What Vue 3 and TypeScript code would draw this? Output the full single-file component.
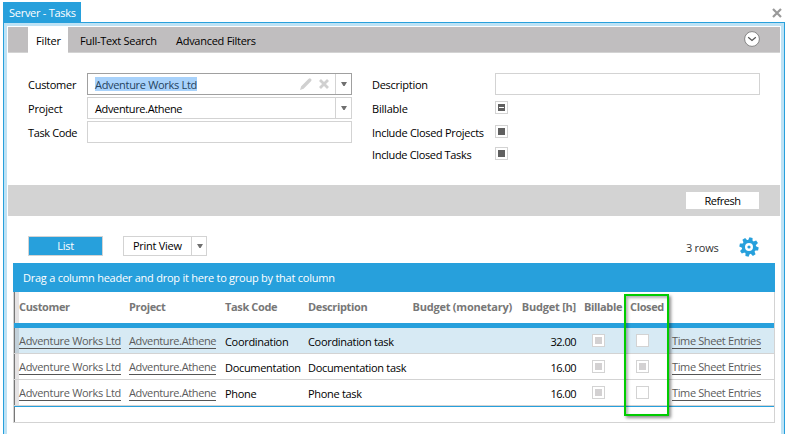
<script setup lang="ts">
interface Task {
  customer: string
  project: string
  code: string
  description: string
  hours: string
  closed: boolean
}

const tasks: Task[] = [
  { customer: 'Adventure Works Ltd', project: 'Adventure.Athene', code: 'Coordination', description: 'Coordination task', hours: '32.00', closed: false },
  { customer: 'Adventure Works Ltd', project: 'Adventure.Athene', code: 'Documentation', description: 'Documentation task', hours: '16.00', closed: true },
  { customer: 'Adventure Works Ltd', project: 'Adventure.Athene', code: 'Phone', description: 'Phone task', hours: '16.00', closed: false },
]
const teeth: number[] = [0, 45, 90, 135, 180, 225, 270, 315]
</script>

<template>
  <div class="page">
    <header class="titlebar">
      <div class="title"><span class="t-title">Server - Tasks</span></div>
      <svg class="close" width="10" height="10" viewBox="0 0 10 10"><path d="M1 1L9 9M9 1L1 9" stroke="#999" stroke-width="2.2" /></svg>
    </header>
    <main class="window">
      <nav class="tabs">
        <span class="tab active t-filter">Filter</span>
        <span class="tab t-full">Full-Text Search</span>
        <span class="tab t-adv">Advanced Filters</span>
        <svg class="collapse" width="16" height="16" viewBox="0 0 16 16"><circle cx="8" cy="8" r="7.4" fill="#fff" stroke="#858585" /><path d="M4.2 6.2L8 9.5L11.8 6.2" fill="none" stroke="#555" stroke-width="1.2" /></svg>
      </nav>
      <section class="filters">
        <div class="fields">
          <div class="field">
            <label class="t-cust">Customer</label>
            <div class="box combo focused">
              <span class="value"><mark class="t-awl">Adventure Works Ltd</mark></span>
              <svg class="edit" width="12" height="12" viewBox="0 0 12 12"><path d="M0 12L1.2 8.3L8.7 .8Q9.8 -.3 11 .9Q12.1 2.1 11 3.3L3.6 10.7Z" fill="#d0d0d0" /></svg>
              <svg class="clear" width="10" height="10" viewBox="0 0 10 10"><path d="M1 1L9 9M9 1L1 9" stroke="#d0d0d0" stroke-width="2.8" /></svg>
              <span class="arrow"><svg width="6" height="4" viewBox="0 0 6 4"><path d="M0 0H6L3.6 4H2.4Z" fill="#707070" /></svg></span>
            </div>
          </div>
          <div class="field">
            <label class="t-proj">Project</label>
            <div class="box combo">
              <span class="value t-ath">Adventure.Athene</span>
              <span class="arrow"><svg width="6" height="4" viewBox="0 0 6 4"><path d="M0 0H6L3.6 4H2.4Z" fill="#707070" /></svg></span>
            </div>
          </div>
          <div class="field"><label class="t-code">Task Code</label><div class="box"></div></div>
        </div>
        <div class="options">
          <div class="option tall"><label class="t-desc">Description</label><div class="box"></div></div>
          <div class="option"><label class="t-bill">Billable</label><i class="check strong mixed"></i></div>
          <div class="option"><label class="t-icp">Include Closed Projects</label><i class="check strong on"></i></div>
          <div class="option short"><label class="t-ict">Include Closed Tasks</label><i class="check strong on"></i></div>
        </div>
      </section>
      <div class="actions"><button class="refresh"><span class="t-ref">Refresh</span></button></div>
      <div class="toolbar">
        <button class="list"><span class="t-list">List</span></button>
        <div class="print"><span class="print-label t-print">Print View</span><span class="print-arrow"><svg width="6" height="4" viewBox="0 0 6 4"><path d="M0 0H6L3.6 4H2.4Z" fill="#707070" /></svg></span></div>
        <span class="count t-rows">3 rows</span>
        <svg class="gear" width="20" height="20" viewBox="-10 -10 20 20">
          <g fill="#27a0dc" transform="rotate(12)"><path v-for="a in teeth" :key="a" d="M-2.3 -6L-1.6 -9.6H1.6L2.3 -6Z" :transform="`rotate(${a})`" /></g>
          <circle r="5.6" fill="none" stroke="#27a0dc" stroke-width="3.2" /><circle r="1.6" fill="#27a0dc" />
        </svg>
      </div>
      <section class="table">
        <div class="groupbar"><span class="t-group">Drag a column header and drop it here to group by that column</span></div>
        <div class="grid">
          <div class="row head">
            <i class="gutter"></i>
            <span class="h-cust">Customer</span><span class="h-proj">Project</span><span class="h-code">Task Code</span><span class="h-desc">Description</span>
            <span class="num h-mon">Budget (monetary)</span><span class="num h-hrs">Budget [h]</span><span class="h-bill">Billable</span><span class="h-clo">Closed</span><span></span>
          </div>
          <div v-for="(t, i) in tasks" :key="i" class="row" :class="{ selected: i === 0 }">
            <i class="gutter"></i>
            <span><a class="t-awl">{{ t.customer }}</a></span>
            <span><a class="t-ath">{{ t.project }}</a></span>
            <span class="t-c">{{ t.code }}</span>
            <span class="t-d">{{ t.description }}</span>
            <span></span>
            <span class="num t-num">{{ t.hours }}</span>
            <span class="cell-check"><i class="check on"></i></span>
            <span class="cell-check closed"><i class="check" :class="{ on: t.closed }"></i></span>
            <span><a class="t-tse">Time Sheet Entries</a></span>
          </div>
          <div class="foot"><i class="gutter"></i></div>
        </div>
        <div class="highlight"></div>
      </section>
    </main>
  </div>
</template>

<style>
body { margin: 0; background: #fff; overflow: hidden; }
</style>

<style scoped>
.page { width: 791px; height: 434px; box-sizing: border-box; padding: 2px 6px 0 3px; overflow: hidden; font: 11px/16px "Open Sans", "Noto Sans", sans-serif; letter-spacing: -.27px; color: #000; white-space: nowrap; }
.page * { box-sizing: border-box; }
.titlebar { display: flex; justify-content: space-between; height: 20px; }
.title { width: 78px; background: #27a0dc; color: #fff; padding: 3px 0 0 6px; }
.close { margin: 6px 3px 0 0; }
.window { height: 440px; border: solid #27a0dc; border-width: 1px 1px 0; box-shadow: inset 3px 3px #bde2f5, inset -3px 0 #bde2f5; padding: 4px 4px 0; }
.tabs { display: flex; height: 26px; background: #c0bebf; border-bottom: 1px solid #d3d3d3; padding-left: 20px; }
.tab { height: 26px; padding: 6px 0 0 12px; }
.tab.active { width: 40px; background: #fff; padding-left: 8px; }
.t-full.tab { width: 96px; }
.t-filter { letter-spacing: -.15px; }
.t-proj, .t-bill { letter-spacing: -.2px; }
.t-code { letter-spacing: -.38px; }
.t-icp, .t-awl { letter-spacing: -.31px; }
.t-ict { letter-spacing: -.34px; }
.t-ath, .t-tse { letter-spacing: -.37px; }
.t-ref, .t-num { letter-spacing: -.5px; }
.t-d, .t-c { letter-spacing: -.31px; }
.t-group { letter-spacing: -.245px; }
.collapse { margin: 4px 20px 0 auto; }
.filters { display: flex; height: 132px; padding: 20px 0 0 20px; }
.fields { width: 324px; margin-right: 20px; display: flex; flex-direction: column; gap: 2px; }
.field, .option { display: flex; height: 22px; }
label { padding-top: 4px; }
.field label { width: 59px; }
.box { width: 265px; height: 22px; border: 1px solid #d3d3d3; background: #fff; }
.combo { display: flex; }
.focused { border-color: #a0a0a0; }
.value { padding: 3px 0 0 7px; flex: 1; }
mark { display: inline-block; height: 14px; line-height: 16px; background: #a8d2fb; color: #25435f; }
.edit { margin: 4px 7px 0 0; }
.clear { margin: 5px 6px 0 0; }
.arrow { width: 16px; border-left: 1px solid #d3d3d3; padding: 8px 0 0 5px; display: flex; }
.options { width: 390px; }
.option { height: 24px; }
.option.short { height: 22px; margin-top: -2px; }
.option label { width: 123px; }
.check { display: block; width: 13px; height: 13px; border: 1px solid #d3d3d3; background: #fff; padding: 2px; }
.check.on::before, .mixed::before { content: ""; display: block; box-sizing: border-box; width: 7px; height: 7px; background: #d3d1d2; }
.strong { margin-top: 4px; }
.strong.on::before { background: #606060; }
.check.mixed::before { border: solid #606060; border-width: 3px 1px; background: #fff; }
.actions { height: 31px; background: #d3d3d3; padding: 7px 21px 0 0; display: flex; justify-content: flex-end; }
button { font: inherit; letter-spacing: inherit; color: inherit; border: 0; padding: 0; margin: 0; }
.refresh { width: 73px; height: 17px; background: #fff; }
.toolbar { height: 47px; padding: 20px 20px 0; display: flex; }
.list { width: 75px; height: 20px; background: #27a0dc; border: 1px solid #d3d3d3; color: #fff; }
.print { display: flex; width: 84px; height: 20px; border: 1px solid #d3d3d3; margin-left: 20px; }
.print-label { width: 67px; padding: 1px 0 0 9px; }
.print-arrow { border-left: 1px solid #d3d3d3; display: flex; padding: 7px 0 0 5px; }
.count { margin: 4px 21px 0 auto; width: 32px; color: #333; }
.gear { margin-top: 1px; margin-right: 1px; }
.table { position: relative; width: 762px; margin-left: 5px; }
.groupbar { height: 29px; background: #27a0dc; color: #fff; padding: 7px 0 0 10px; }
.grid { border: solid #d3d3d3; border-width: 0 1px 1px; height: 131px; }
.row { display: grid; grid-template-columns: 5px 110px 96px 83px 104px 100px 64px 46px 42px 1fr; height: 26px; border-bottom: 1px solid #d3d3d3; }
.row > span { padding-top: 6px; }
.head { height: 36px; border-bottom: 5px solid #27a0dc; color: #777; font-weight: 700; letter-spacing: -.36px; }
.h-mon, .h-hrs { letter-spacing: -.23px; }
.gutter { width: 5px; height: 100%; background: #e5e3e4; border-left: 1px solid #777; }
.selected { background: #d7eaf4; }
.selected .gutter { background: #c3d1da; }
.num { text-align: right; }
.h-bill, .h-clo { padding-left: 8px; }
.row > .cell-check { padding: 6px 0 0 16px; }
.row > .cell-check.closed { padding-left: 14px; }
.row > span:last-child { padding: 5px 0 0 8px; }
.row > span:nth-child(2), .row > span:nth-child(3) { padding-top: 5px; }
.head > span:nth-child(n) { padding-top: 7px; }
a { display: inline-block; height: 16px; border-bottom: 1px solid #555; color: #5b5b5b; }
.foot { height: 17px; border-top: 1px solid #27a0dc; }
.highlight { position: absolute; left: 611px; top: 31px; width: 45px; height: 122px; border: 2px solid #0c0; box-shadow: 2px 2px 3px rgba(0,0,0,.45), inset 2px 2px 3px rgba(0,0,0,.3); }
</style>
